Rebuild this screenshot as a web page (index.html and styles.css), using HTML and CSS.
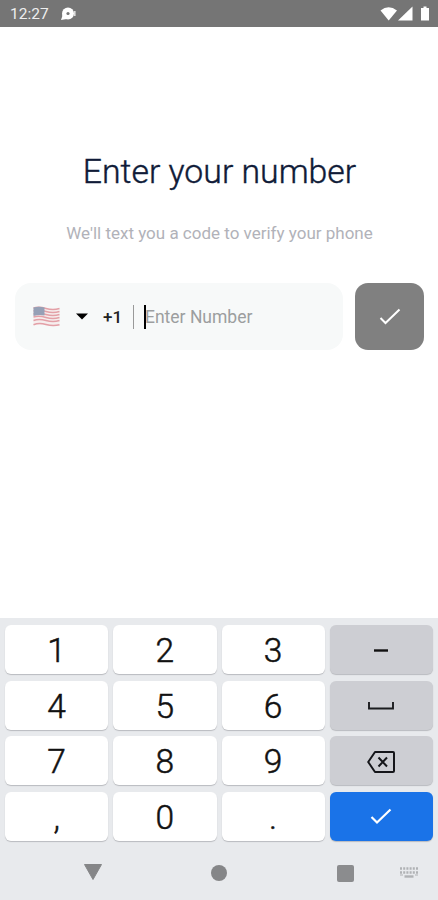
FILE: index.html
```html
<!DOCTYPE html>
<html lang="en">
<head>
  <meta charset="UTF-8">
  <title>Enter your number</title>
  <link rel="stylesheet" href="styles.css">
</head>
<body>

  <!-- Status bar -->
  <div class="status-bar">
    <span class="time">12:27</span>
    <svg class="status-app" width="17" height="14" viewBox="0 0 17 14">
      <circle cx="7" cy="6.5" r="6" fill="#fff"/>
      <path d="M0 13l2-6 4 5z" fill="#fff"/>
      <path d="M13.800 4v5" stroke="#ddd" stroke-width="1.6"/>
      <circle cx="7" cy="6.5" r="1.6" fill="#777"/>
    </svg>
    <svg class="status-icons" width="50" height="16" viewBox="0 0 50 16">
      <path d="M0.5 4.5Q8.500-2 17 4.500L8.700 14.500z" fill="#fff"/>
      <path d="M18 14.500L32.500 0.500v14z" fill="#fff"/>
      <path d="M41 2h2.500V.5h3V2H49v12.500h-8z" fill="#fff"/>
    </svg>
  </div>

  <!-- Number form -->
  <div class="content">
    <h1>Enter your number</h1>
    <p class="subtitle">We'll text you a code to verify your phone</p>
    <div class="form-row">
      <div class="phone-field">
        <svg class="flag" width="27" height="21" viewBox="0 0 27 21">
          <path d="M.5 1.500Q6 0 13 2t13.500 0v17.500Q20 21 13 19.300t-12.500 0z" fill="#f6eeee"/>
          <g fill="none" stroke="#e3a0a7" stroke-width="1.500">
            <path d="M.5 2Q6 .5 13 2.500t13.500 0"/>
            <path d="M.5 5Q6 3.500 13 5.500t13.500 0"/>
            <path d="M.5 8Q6 6.500 13 8.500t13.500 0"/>
            <path d="M.5 11Q6 9.500 13 11.500t13.500 0"/>
            <path d="M.5 14.500Q6 12.500 13 14.500t13.500 0"/>
            <path d="M.5 18.800Q6 16.500 13 18.500t13.500 .3"/>
          </g>
          <path d="M.5 1.500Q6 0 11.500 1.500v8Q6 8.500 .5 10z" fill="#96a0b6"/>
        </svg>
        <svg class="arrow" width="12" height="7" viewBox="0 0 12 7"><path d="M0 .5h12L6 6.500z" fill="#000"/></svg>
        <span class="code">+1</span>
        <span class="divider"></span>
        <span class="caret"></span>
        <span class="placeholder">Enter Number</span>
      </div>
      <button class="submit" aria-label="Continue">
        <svg width="22" height="18" viewBox="0 0 22 18"><path d="M1.500 10l5 5L20.500 1.500" fill="none" stroke="#fff" stroke-width="2"/></svg>
      </button>
    </div>
  </div>

  <!-- Keyboard -->
  <div class="keyboard">
    <div class="keys">
      <button class="key">1</button>
      <button class="key">2</button>
      <button class="key">3</button>
      <button class="key gray" aria-label="Dash">
        <svg width="14" height="3" viewBox="0 0 14 3"><path d="M0 1.500h14" stroke="#111" stroke-width="2.400"/></svg>
      </button>
      <button class="key">4</button>
      <button class="key">5</button>
      <button class="key">6</button>
      <button class="key gray" aria-label="Space">
        <svg width="26" height="8" viewBox="0 0 26 8"><path d="M1 0v6.500h24V0" fill="none" stroke="#1b1c1f" stroke-width="1.900"/></svg>
      </button>
      <button class="key">7</button>
      <button class="key">8</button>
      <button class="key">9</button>
      <button class="key gray" aria-label="Delete">
        <svg width="28" height="22" viewBox="0 0 28 22" fill="none" stroke="#15161a" stroke-width="2">
          <path d="M8 1h18q1 0 1 1v18q0 1-1 1H8L1.200 11z" stroke-linejoin="round"/>
          <path d="M11.500 6.500l8.500 9M20 6.500l-8.500 9"/>
        </svg>
      </button>
      <button class="key">,</button>
      <button class="key">0</button>
      <button class="key">.</button>
      <button class="key blue" aria-label="Done">
        <svg width="22" height="17" viewBox="0 0 22 17"><path d="M1.500 9l5.500 5.500L20.500 1.500" fill="none" stroke="#fff" stroke-width="2.200"/></svg>
      </button>
    </div>
    <div class="nav-bar">
      <svg class="nav-back" width="18" height="16" viewBox="0 0 18 16"><path d="M.5.5h17L9 15.500z" fill="#858688" stroke="#858688" stroke-linejoin="round"/></svg>
      <span class="nav-home"></span>
      <span class="nav-recent"></span>
      <svg class="nav-keyboard" width="18" height="12" viewBox="0 0 18 12" stroke="#b0b2b5" fill="none">
        <path d="M0 1.500h18M0 5.500h18" stroke-width="2.400" stroke-dasharray="2 1.200"/>
        <path d="M0 8h3M15 8h3" stroke-width="1"/>
        <path d="M4.500 9.500h9" stroke-width="2.400"/>
      </svg>
    </div>
  </div>

</body>
</html>
```

FILE: styles.css
```css
* {
  box-sizing: border-box;
}
body {
  font-family: Roboto, Arial, sans-serif;
  background: #fff;
  display: flex;
  flex-direction: column;
  height: 900px;
  margin: 0;
  overflow: hidden;
}
svg {
  display: block;
}
button {
  border: none;
  padding: 0;
  font-family: inherit;
  display: flex;
  align-items: center;
  justify-content: center;
}
.status-bar {
  display: flex;
  align-items: center;
  height: 27px;
  padding: 1px 8px 0 10px;
  background: #757575;
}
.time {
  color: #eee;
  font-size: 15.5px;
}
.status-app {
  margin-left: 12px;
}
.status-icons {
  margin-left: auto;
}
.content {
  flex: 1;
  padding: 123px 14px 0 15px;
}
h1 {
  margin: 0;
  color: #101b38;
  font-size: 33.8px;
  font-weight: 300;
  line-height: 44px;
  text-align: center;
  -webkit-text-stroke: 0.4px #101b38;
}
.subtitle {
  margin: 27px 0 0;
  color: #b1b2b9;
  font-size: 17px;
  line-height: 24px;
  text-align: center;
}
.form-row {
  display: flex;
  gap: 12px;
  margin-top: 38px;
}
.phone-field {
  display: flex;
  align-items: center;
  width: 328px;
  height: 67px;
  padding-left: 18px;
  border-radius: 16px;
  background: #f7f9f9;
}
.arrow {
  margin-left: 16px;
}
.code {
  width: 20px;
  margin-left: 15px;
  color: #222;
  font-size: 17px;
  font-weight: 500;
}
.divider {
  width: 1px;
  height: 24px;
  margin-left: 10px;
  background: #999;
}
.caret {
  width: 2px;
  height: 24px;
  margin-left: 10px;
  background: #000;
}
.placeholder {
  margin-left: -1px;
  color: #9c9e9f;
  font-size: 17.5px;
}
.submit {
  width: 69px;
  height: 67px;
  border-radius: 13px;
  background: #808080;
}
.keyboard {
  height: 282px;
  padding: 7px 5px 0;
  background: #e8eaed;
}
.keys {
  display: grid;
  grid-template-columns: repeat(4, 1fr);
  grid-auto-rows: 49px;
  gap: 6.500px 5px;
}
.key {
  padding-top: 2px;
  border-radius: 6px;
  background: #fff;
  box-shadow: 0 1px 1px #b9bbbf;
  color: #111;
  font-size: 33.5px;
  font-weight: 300;
  line-height: 49px;
  -webkit-text-stroke: 0.5px #111;
}
.gray {
  background: #cdced3;
}
.blue {
  padding-top: 0;
  background: #1a73e8;
}
.nav-bar {
  display: flex;
  align-items: center;
  height: 65px;
  padding-left: 79px;
}
.nav-back {
  margin-top: -2px;
}
.nav-home {
  width: 16px;
  height: 16px;
  margin-left: 109px;
  border-radius: 50%;
  background: #858688;
}
.nav-recent {
  width: 17px;
  height: 17px;
  margin-left: 110px;
  border-radius: 2px;
  background: #8b8c8e;
}
.nav-keyboard {
  margin-left: 46px;
}
```
